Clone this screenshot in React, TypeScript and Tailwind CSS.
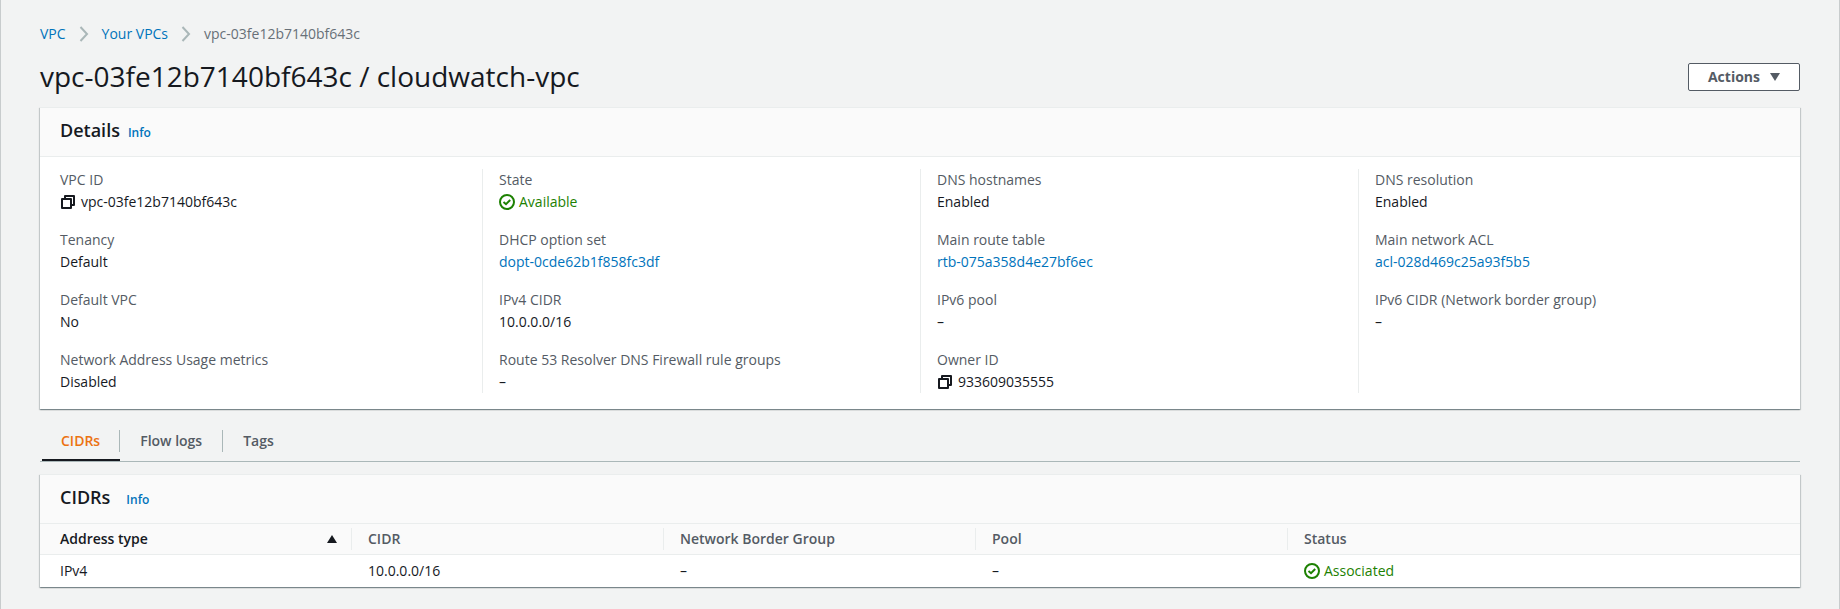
import type { ReactNode } from "react";

const linkClass = "text-[#0073bb] hover:underline";

function Chevron() {
  return (
    <svg className="h-4 w-3" viewBox="0 0 12 16" fill="none" stroke="#aab7b8" strokeWidth="2" aria-hidden="true">
      <path d="M2.5 1 9 8l-6.5 7" />
    </svg>
  );
}

function CopyIcon() {
  return (
    <svg className="h-4 w-4" viewBox="0 0 16 16" fill="none" stroke="#16191f" strokeWidth="2" strokeLinejoin="round" aria-hidden="true">
      <path d="M2 5h9v9H2z" />
      <path d="M5 5V2h9v9h-3" />
    </svg>
  );
}

function CheckIcon() {
  return (
    <svg className="h-4 w-4 shrink-0" viewBox="0 0 16 16" fill="none" stroke="#1d8102" strokeWidth="2" aria-hidden="true">
      <circle cx="8" cy="8" r="7" />
      <path d="m4.5 8 2.5 2.2L11.2 6" />
    </svg>
  );
}

function Copyable({ children }: { children: ReactNode }) {
  return (
    <span className="flex items-center gap-[5px]">
      <button type="button" aria-label="Copy">
        <CopyIcon />
      </button>
      {children}
    </span>
  );
}

function Status({ children }: { children: ReactNode }) {
  return (
    <span className="flex items-center gap-1 text-[#1d8102]">
      <CheckIcon />
      {children}
    </span>
  );
}

function Link({ children }: { children: ReactNode }) {
  return (
    <a href="#" className={linkClass}>
      {children}
    </a>
  );
}

const columns: { label: string; value: ReactNode }[][] = [
  [
    { label: "VPC ID", value: <Copyable>vpc-03fe12b7140bf643c</Copyable> },
    { label: "Tenancy", value: "Default" },
    { label: "Default VPC", value: "No" },
    { label: "Network Address Usage metrics", value: "Disabled" },
  ],
  [
    { label: "State", value: <Status>Available</Status> },
    { label: "DHCP option set", value: <Link>dopt-0cde62b1f858fc3df</Link> },
    { label: "IPv4 CIDR", value: "10.0.0.0/16" },
    { label: "Route 53 Resolver DNS Firewall rule groups", value: "–" },
  ],
  [
    { label: "DNS hostnames", value: "Enabled" },
    { label: "Main route table", value: <Link>rtb-075a358d4e27bf6ec</Link> },
    { label: "IPv6 pool", value: "–" },
    { label: "Owner ID", value: <Copyable>933609035555</Copyable> },
  ],
  [
    { label: "DNS resolution", value: "Enabled" },
    { label: "Main network ACL", value: <Link>acl-028d469c25a93f5b5</Link> },
    { label: "IPv6 CIDR (Network border group)", value: "–" },
  ],
];

const headings = ["CIDR", "Network Border Group", "Pool", "Status"];

function Card({ title, gap, children }: { title: string; gap: string; children: ReactNode }) {
  return (
    <section className="border-t border-[#eaeded] bg-white shadow-[0_1px_1px_0_rgba(0,28,36,0.3),1px_1px_1px_0_rgba(0,28,36,0.15),-1px_1px_1px_0_rgba(0,28,36,0.15)]">
      <header className={`flex items-baseline border-b border-[#eaeded] bg-[#fafafa] px-5 pt-[11px] pb-3.5 ${gap}`}>
        <h2 className="text-lg leading-[23px] font-semibold">{title}</h2>
        <a href="#" className="text-xs font-semibold text-[#0073bb]">
          Info
        </a>
      </header>
      {children}
    </section>
  );
}

export default function App() {
  return (
    <div className="min-h-screen border-x border-[#c8cccd] bg-[#f2f3f3] px-[39px] pt-[23px] font-['Open_Sans',sans-serif] text-sm leading-[22px] text-[#16191f]">
      <nav aria-label="Breadcrumb">
        <ol className="flex items-center gap-3">
          <li><Link>VPC</Link></li>
          <li><Chevron /></li>
          <li><Link>Your VPCs</Link></li>
          <li><Chevron /></li>
          <li className="text-[#687078]">vpc-03fe12b7140bf643c</li>
        </ol>
      </nav>

      <div className="mt-4 mb-3.5 flex items-center justify-between">
        <h1 className="pb-0.5 text-[28px] leading-[30px]">vpc-03fe12b7140bf643c / cloudwatch-vpc</h1>
        <button
          type="button"
          className="flex h-7 items-center gap-2.5 rounded-[2px] border border-[#545b64] bg-white px-[19px] font-bold text-[#545b64]"
        >
          Actions
          <svg className="h-2 w-2.5" viewBox="0 0 10 8" fill="#545b64" aria-hidden="true">
            <path d="M0 0h10L5 8z" />
          </svg>
        </button>
      </div>

      <Card title="Details" gap="gap-2">
        <div className="grid grid-cols-4 px-1 pt-3 pb-4">
          {columns.map((items, i) => (
            <dl key={i} className="space-y-4 border-[#eaeded] px-4 not-first:border-l">
              {items.map((item) => (
                <div key={item.label}>
                  <dt className="text-[#545b64]">{item.label}</dt>
                  <dd>{item.value}</dd>
                </div>
              ))}
            </dl>
          ))}
        </div>
      </Card>

      <div role="tablist" className="mt-3 mb-3 flex items-start border-b border-[#aab7b8] px-0.5 font-semibold text-[#545b64]">
        <button type="button" role="tab" aria-selected="true" className="border-b-2 border-[#16191f] pt-[9px] pb-[7px] text-[#ec7211]">
          <span className="block border-r border-[#aab7b8] px-[19px]">CIDRs</span>
        </button>
        <button type="button" role="tab" aria-selected="false" className="pt-[9px]">
          <span className="block border-r border-[#aab7b8] px-5">Flow logs</span>
        </button>
        <button type="button" role="tab" aria-selected="false" className="px-5 pt-[9px]">
          Tags
        </button>
      </div>

      <Card title="CIDRs" gap="gap-4">
        <table className="w-full table-fixed text-left">
          <thead className="bg-[#fafafa]">
            <tr className="border-b border-[#eaeded]">
              <th scope="col" aria-sort="ascending" className="w-[312px] py-1 font-semibold">
                <div className="flex items-center justify-between border-r border-[#eaeded] pr-[14px] pl-5">
                  Address type
                  <svg className="h-2 w-2.5" viewBox="0 0 10 8" fill="#16191f" aria-hidden="true">
                    <path d="M0 8h10L5 0z" />
                  </svg>
                </div>
              </th>
              {headings.map((h) => (
                <th key={h} scope="col" className="w-[312px] py-1 font-semibold text-[#545b64] last:w-auto">
                  <div className={h === "Status" ? "px-4" : "border-r border-[#eaeded] px-4"}>{h}</div>
                </th>
              ))}
            </tr>
          </thead>
          <tbody>
            <tr>
              <td className="px-5 py-[5px]">IPv4</td>
              <td className="px-4">10.0.0.0/16</td>
              <td className="px-4">–</td>
              <td className="px-4">–</td>
              <td className="px-4"><Status>Associated</Status></td>
            </tr>
          </tbody>
        </table>
      </Card>
    </div>
  );
}
